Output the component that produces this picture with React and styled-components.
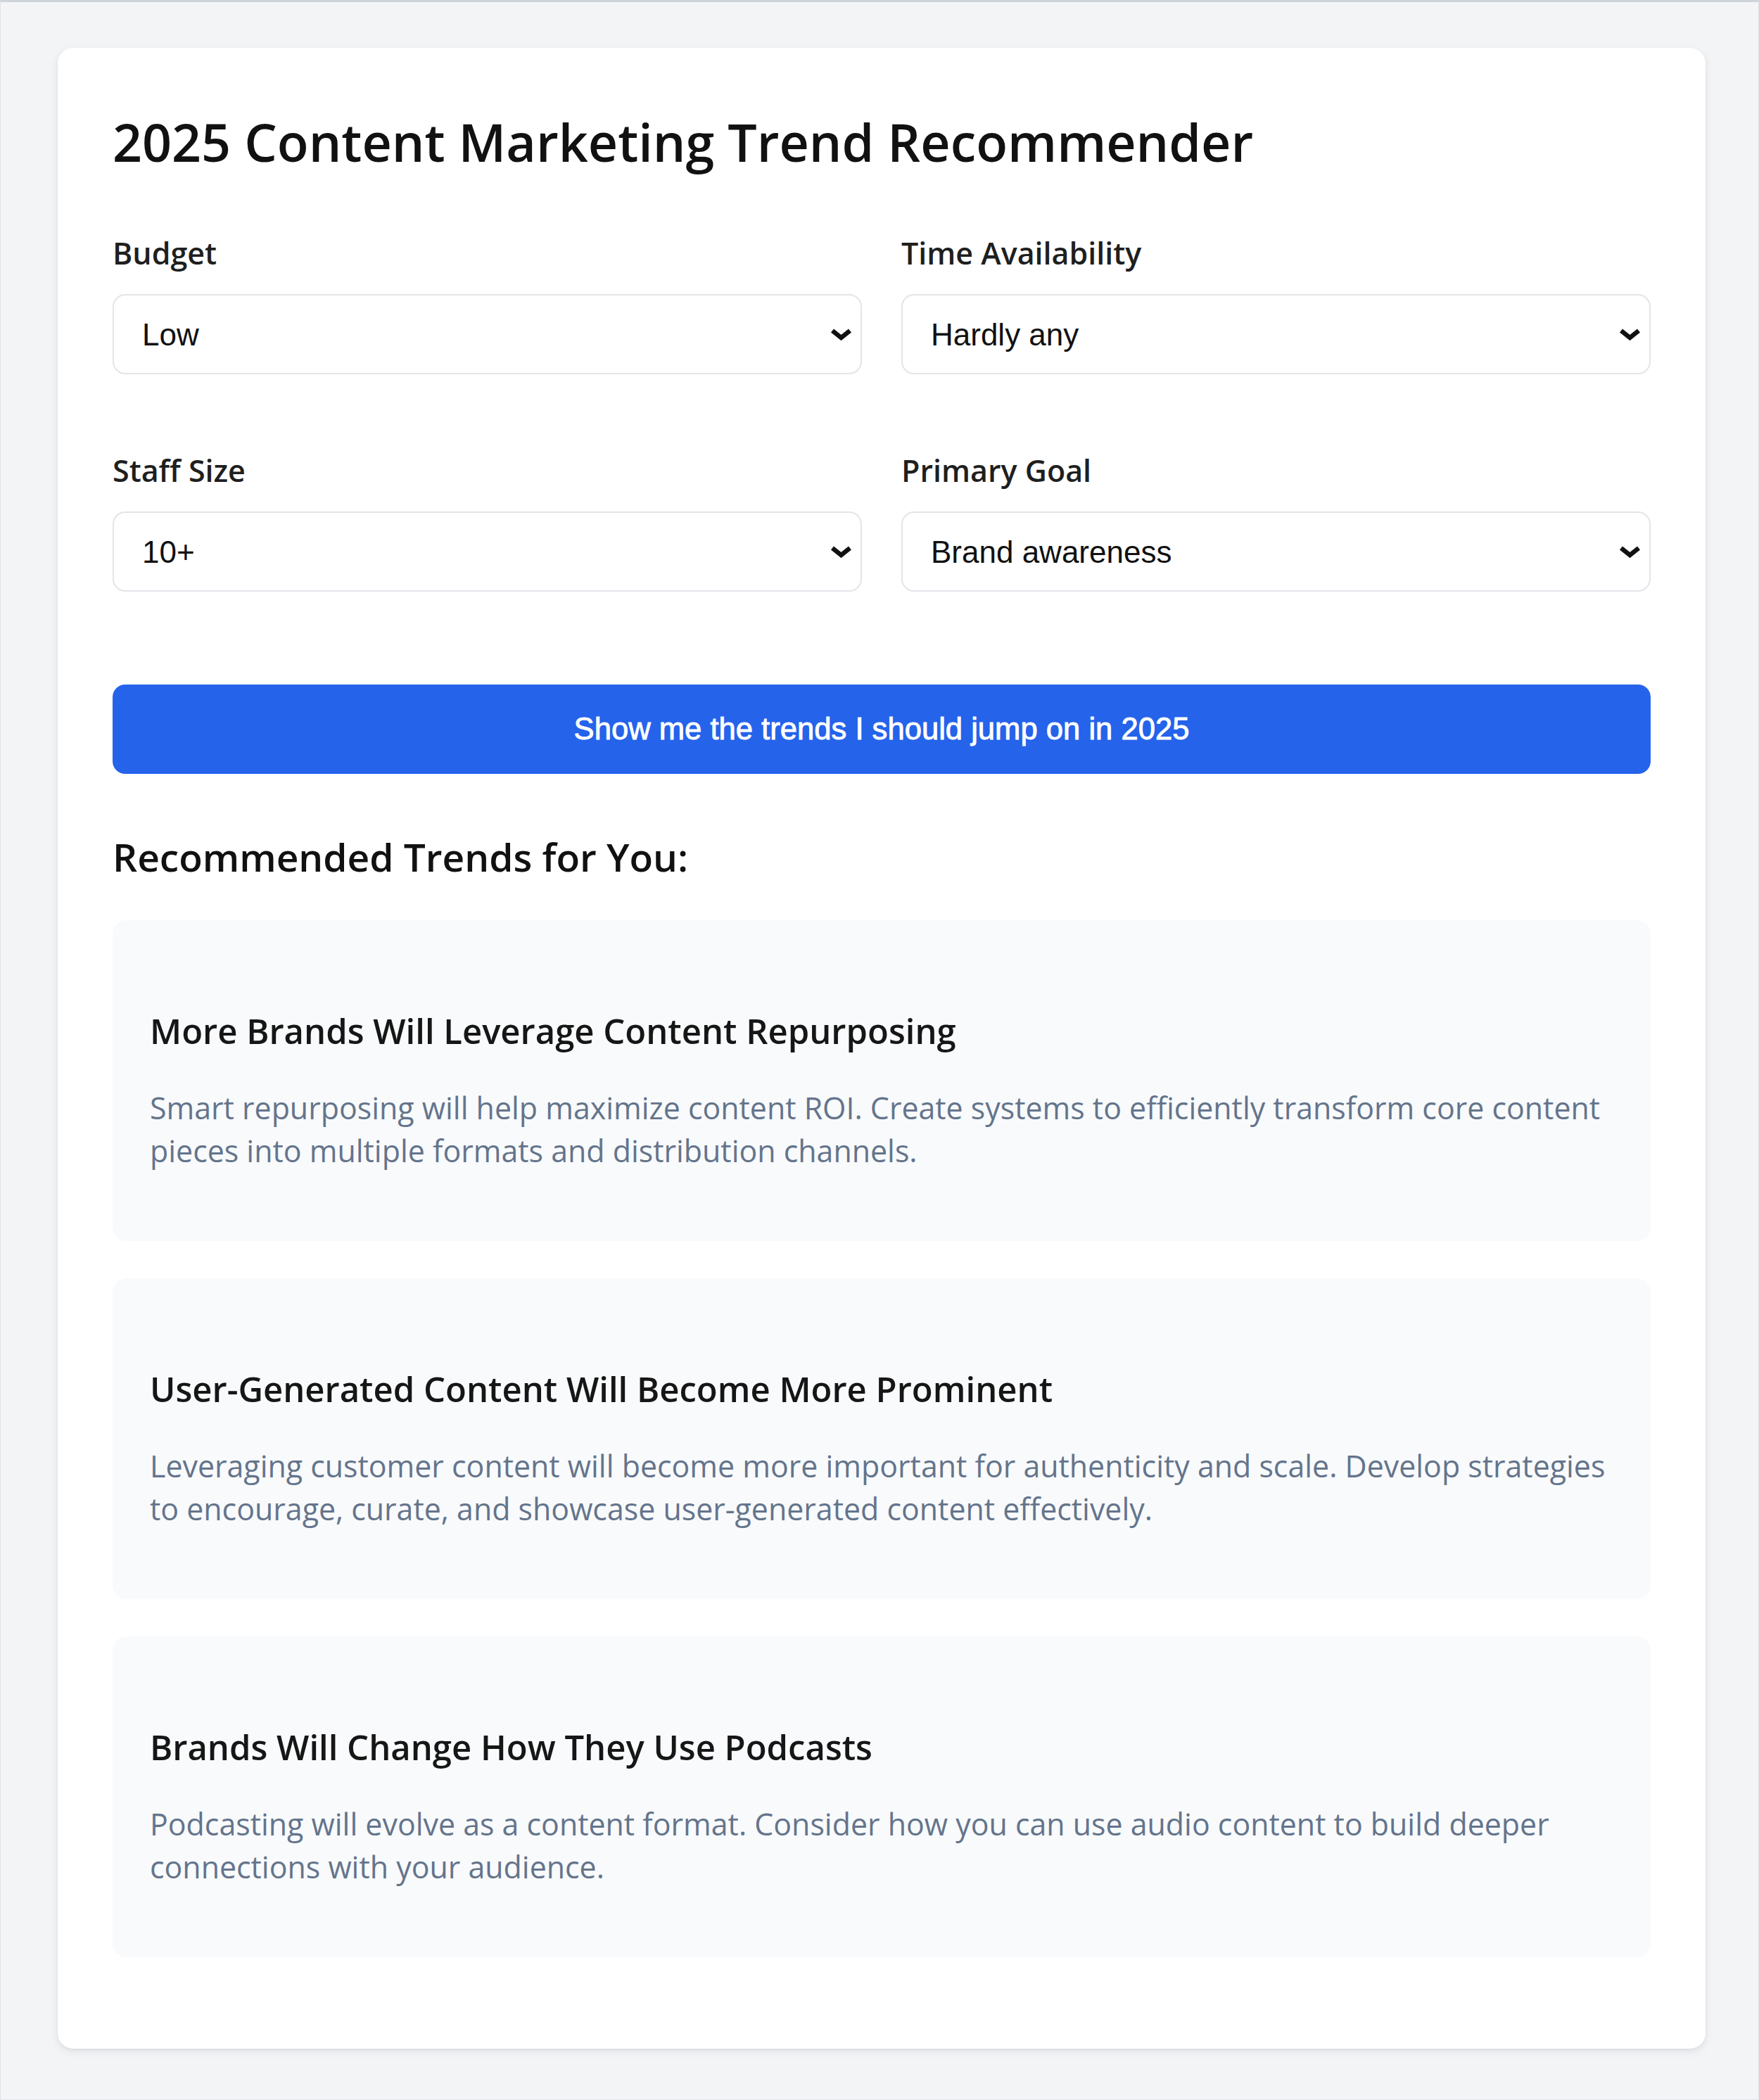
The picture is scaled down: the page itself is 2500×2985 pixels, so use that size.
import React, { useState } from 'react';
import styled, { createGlobalStyle } from 'styled-components';

const GlobalStyle = createGlobalStyle`
  * {
    box-sizing: border-box;
  }

  body {
    margin: 0;
    background: #f3f4f6;
    font-family: 'Open Sans', 'Noto Sans', sans-serif;
    color: #1a1a1a;
  }
`;

const Page = styled.div`
  min-height: 2985px;
  border: 1px solid #e2e3e6;
  border-top: 3px solid #cfd3da;
  padding: 65px 75px 71px 81px;
`;

const Card = styled.div`
  background: #ffffff;
  border-radius: 22px;
  box-shadow: 0 2px 4px rgba(15, 23, 42, 0.05), 0 4px 14px rgba(15, 23, 42, 0.07);
  padding: 78px;
`;

const Title = styled.h1`
  font-size: 73.5px;
  font-weight: 600;
  line-height: 111px;
  color: #111111;
  margin: 0 0 73px;
`;

const FormGrid = styled.div`
  display: grid;
  grid-template-columns: 1fr 1fr;
  column-gap: 56px;
  row-gap: 107px;
  margin-bottom: 132px;
`;

const Field = styled.div`
  display: flex;
  flex-direction: column;
`;

const Label = styled.label`
  font-size: 43px;
  font-weight: 600;
  line-height: 60px;
  color: #1f1f1f;
  margin-bottom: 28px;
`;

const SelectWrap = styled.div`
  position: relative;
`;

const Select = styled.select`
  appearance: none;
  -webkit-appearance: none;
  width: 100%;
  height: 114px;
  padding: 0 80px 0 40px;
  border: 2px solid #e3e5e9;
  border-radius: 18px;
  background: #ffffff;
  font-family: 'Liberation Sans', Arial, sans-serif;
  font-size: 44px;
  color: #111111;
  outline: none;
`;

const Chevron = styled.svg`
  position: absolute;
  right: 13px;
  top: 50%;
  transform: translateY(-50%);
  pointer-events: none;
`;

const SubmitButton = styled.button`
  display: block;
  width: 100%;
  height: 127px;
  border: none;
  border-radius: 18px;
  background: #2563eb;
  color: #ffffff;
  font-family: 'Liberation Sans', Arial, sans-serif;
  font-size: 43.6px;
  -webkit-text-stroke: 0.9px #ffffff;
  cursor: pointer;
  margin-bottom: 80px;
`;

const ResultsTitle = styled.h2`
  font-size: 55px;
  font-weight: 600;
  line-height: 75px;
  color: #111111;
  margin: 0 0 53px;
`;

const TrendList = styled.div`
  display: flex;
  flex-direction: column;
  gap: 53px;
  margin-bottom: 52px;
`;

const TrendCard = styled.div`
  background: #f8fafc;
  border-radius: 20px;
  padding: 53px;
`;

const TrendTitle = styled.h3`
  font-size: 49px;
  font-weight: 600;
  line-height: 66px;
  color: #161616;
  margin: 71px 0 46px;
`;

const TrendText = styled.p`
  font-size: 42.9px;
  line-height: 61px;
  color: #64748b;
  margin: 0 0 45px;
`;

const fields = [
  { id: 'budget', label: 'Budget', value: 'low', options: [['low', 'Low'], ['medium', 'Medium'], ['high', 'High']] },
  { id: 'time', label: 'Time Availability', value: 'hardly', options: [['hardly', 'Hardly any'], ['some', 'Some'], ['plenty', 'Plenty']] },
  { id: 'staff', label: 'Staff Size', value: '10+', options: [['1', 'Just me'], ['2-5', '2-5'], ['6-10', '6-10'], ['10+', '10+']] },
  { id: 'goal', label: 'Primary Goal', value: 'awareness', options: [['awareness', 'Brand awareness'], ['leads', 'Lead generation'], ['sales', 'Sales'], ['engagement', 'Engagement']] }
];

const trends = [
  {
    title: 'More Brands Will Leverage Content Repurposing',
    text: 'Smart repurposing will help maximize content ROI. Create systems to efficiently transform core content pieces into multiple formats and distribution channels.'
  },
  {
    title: 'User-Generated Content Will Become More Prominent',
    text: 'Leveraging customer content will become more important for authenticity and scale. Develop strategies to encourage, curate, and showcase user-generated content effectively.'
  },
  {
    title: 'Brands Will Change How They Use Podcasts',
    text: 'Podcasting will evolve as a content format. Consider how you can use audio content to build deeper connections with your audience.'
  }
];

const ChevronIcon = () => (
  <Chevron width="33" height="18" viewBox="0 0 33 18">
    <polyline
      points="4,4 16.5,14 29,4"
      fill="none"
      stroke="#111"
      strokeWidth="6.5"
      strokeLinejoin="miter"
    />
  </Chevron>
);

const App = () => {
  const [values, setValues] = useState(
    Object.fromEntries(fields.map(f => [f.id, f.value]))
  );

  const handleChange = (id) => (e) => {
    setValues({ ...values, [id]: e.target.value });
  };

  return (
    <>
      <GlobalStyle />
      <Page>
        <Card>
          <Title>2025 Content Marketing Trend Recommender</Title>

          <FormGrid>
            {fields.map(field => (
              <Field key={field.id}>
                <Label htmlFor={field.id}>{field.label}</Label>
                <SelectWrap>
                  <Select id={field.id} value={values[field.id]} onChange={handleChange(field.id)}>
                    {field.options.map(([value, label]) => (
                      <option key={value} value={value}>{label}</option>
                    ))}
                  </Select>
                  <ChevronIcon />
                </SelectWrap>
              </Field>
            ))}
          </FormGrid>

          <SubmitButton type="button">Show me the trends I should jump on in 2025</SubmitButton>

          <ResultsTitle>Recommended Trends for You:</ResultsTitle>
          <TrendList>
            {trends.map(trend => (
              <TrendCard key={trend.title}>
                <TrendTitle>{trend.title}</TrendTitle>
                <TrendText>{trend.text}</TrendText>
              </TrendCard>
            ))}
          </TrendList>
        </Card>
      </Page>
    </>
  );
};

export default App;
